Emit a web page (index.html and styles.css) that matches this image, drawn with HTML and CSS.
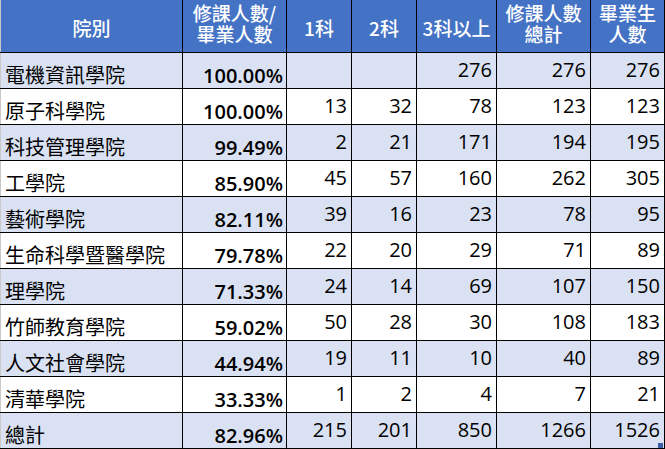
FILE: index.html
```html
<!DOCTYPE html>
<html lang="zh-Hant">
<head>
<meta charset="utf-8">
<link rel="stylesheet" href="styles.css">
</head>
<body>
<div class="wrap">
<table class="grid">
<colgroup>
<col class="c1"><col class="c2"><col class="c3"><col class="c4"><col class="c5"><col class="c6"><col class="c7">
</colgroup>
<thead>
<tr class="head">
<th class="one first">院別</th>
<th class="two">修課人數/<br>畢業人數</th>
<th class="one">1科</th>
<th class="one">2科</th>
<th class="one">3科以上</th>
<th class="two">修課人數<br>總計</th>
<th class="two">畢業生<br>人數</th>
</tr>
</thead>
<tbody>
<tr class="alt"><td class="name">電機資訊學院</td><td class="pct">100.00%</td><td class="num"></td><td class="num"></td><td class="num">276</td><td class="num">276</td><td class="num">276</td></tr>
<tr><td class="name">原子科學院</td><td class="pct">100.00%</td><td class="num">13</td><td class="num">32</td><td class="num">78</td><td class="num">123</td><td class="num">123</td></tr>
<tr class="alt"><td class="name">科技管理學院</td><td class="pct">99.49%</td><td class="num">2</td><td class="num">21</td><td class="num">171</td><td class="num">194</td><td class="num">195</td></tr>
<tr><td class="name">工學院</td><td class="pct">85.90%</td><td class="num">45</td><td class="num">57</td><td class="num">160</td><td class="num">262</td><td class="num">305</td></tr>
<tr class="alt"><td class="name">藝術學院</td><td class="pct">82.11%</td><td class="num">39</td><td class="num">16</td><td class="num">23</td><td class="num">78</td><td class="num">95</td></tr>
<tr><td class="name">生命科學暨醫學院</td><td class="pct">79.78%</td><td class="num">22</td><td class="num">20</td><td class="num">29</td><td class="num">71</td><td class="num">89</td></tr>
<tr class="alt"><td class="name">理學院</td><td class="pct">71.33%</td><td class="num">24</td><td class="num">14</td><td class="num">69</td><td class="num">107</td><td class="num">150</td></tr>
<tr><td class="name">竹師教育學院</td><td class="pct">59.02%</td><td class="num">50</td><td class="num">28</td><td class="num">30</td><td class="num">108</td><td class="num">183</td></tr>
<tr class="alt"><td class="name">人文社會學院</td><td class="pct">44.94%</td><td class="num">19</td><td class="num">11</td><td class="num">10</td><td class="num">40</td><td class="num">89</td></tr>
<tr><td class="name">清華學院</td><td class="pct">33.33%</td><td class="num">1</td><td class="num">2</td><td class="num">4</td><td class="num">7</td><td class="num">21</td></tr>
<tr class="alt"><td class="name">總計</td><td class="pct">82.96%</td><td class="num">215</td><td class="num">201</td><td class="num">850</td><td class="num">1266</td><td class="num">1526</td></tr>
</tbody>
</table>
<span class="handle"></span>
</div>
</body>
</html>
```

FILE: styles.css
```css
html, body {
  margin: 0;
  padding: 0;
  background: #ffffff;
}

.wrap {
  position: relative;
  width: 664px;
}

.grid {
  border-collapse: collapse;
  table-layout: fixed;
  width: 664px;
  font-family: "Open Sans", "Noto Sans CJK TC", sans-serif;
  color: #000000;
}

.c1 { width: 182px; }
.c2 { width: 104px; }
.c3 { width: 65px; }
.c4 { width: 65px; }
.c5 { width: 80px; }
.c6 { width: 94px; }
.c7 { width: 74px; }

.grid th,
.grid td {
  border: 1px solid #000000;
  padding: 0;
  overflow: hidden;
  white-space: nowrap;
}

.grid tr.head {
  height: 52px;
}

.grid tbody tr {
  height: 36px;
}

.grid th {
  background: #4472c4;
  color: #ffffff;
  font-family: "Noto Sans CJK TC", sans-serif;
  font-weight: 500;
  font-size: 19px;
  line-height: 21px;
  text-align: center;
  vertical-align: middle;
  border-top: none;
}

.grid th.one {
  padding-top: 3px;
}

.grid th.two {
  padding-bottom: 5px;
}

.grid th.first,
.grid td.name {
  border-left-color: #c8c8c8;
}

.grid td {
  font-size: 20px;
  line-height: 20px;
  background: #ffffff;
}

.grid tr.alt td {
  background: #d9e1f2;
}

.grid td.name {
  text-align: left;
  padding-left: 4px;
  vertical-align: bottom;
  padding-bottom: 3px;
  font-family: "Noto Sans CJK TC", sans-serif;
}

.grid td.pct {
  text-align: right;
  padding-right: 3px;
  vertical-align: bottom;
  padding-bottom: 2px;
  font-weight: 600;
}

.grid td.num {
  text-align: right;
  padding-right: 4px;
  vertical-align: middle;
}

.handle {
  position: absolute;
  right: 1px;
  bottom: 1px;
  width: 5px;
  height: 5px;
  background: #3c5fa8;
}
```
